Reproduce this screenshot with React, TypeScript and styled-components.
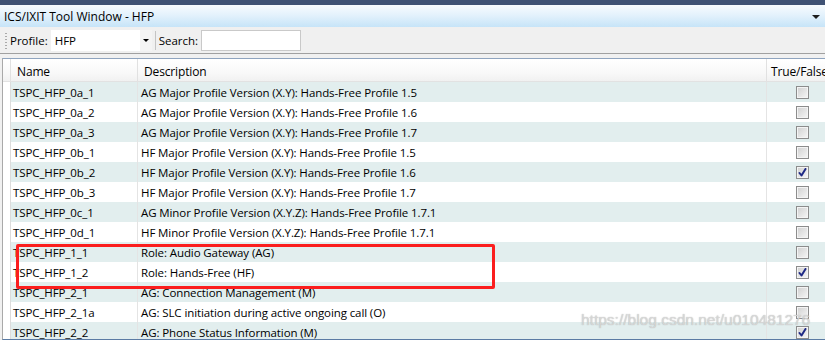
import React from "react";
import styled, { createGlobalStyle } from "styled-components";

const Global = createGlobalStyle`
  html, body { margin: 0; padding: 0; background: #ffffff; overflow: hidden; }
  body { font-family: "Open Sans", "Noto Sans", "Liberation Sans", sans-serif; }
`;

const Window = styled.div`
  width: 825px;
  height: 340px;
  overflow: hidden;
  position: relative;
  display: flex;
  flex-direction: column;
  background: #f0f0f0;
  font-family: "Open Sans", "Noto Sans", sans-serif;
  font-size: 11.5px;
  color: #000;
`;

const TopStrip = styled.div`
  height: 5px;
  background: #3f5274;
  flex: none;
`;

const TitleBar = styled.div`
  height: 22px;
  flex: none;
  display: flex;
  align-items: center;
  justify-content: space-between;
  padding: 0 5px 0 4px;
  background: linear-gradient(#f7fbfe, #e4f2fc 45%, #c6e4f8);
  font-size: 12px;
`;

const DropArrow = styled.span`
  width: 0;
  height: 0;
  border-left: 4px solid transparent;
  border-right: 4px solid transparent;
  border-top: 4px solid #1e1e1e;
  margin-top: 2px;
`;

const Toolbar = styled.div`
  flex: none;
  display: flex;
  align-items: center;
  padding-left: 5px;
  background: #f0f0f0;
  border-bottom: 1px solid #a0a0a0;
  box-sizing: border-box;
  height: 27px;
`;

const Grip = styled.span`
  width: 2px;
  height: 17px;
  margin-right: 3px;
  background-image: radial-gradient(circle, #a9a9a9 0.9px, transparent 1px);
  background-size: 2px 3px;
`;

const Label = styled.span`
  font-size: 11.5px;
  margin-right: 3px;
`;

const Combo = styled.div`
  width: 101px;
  height: 21px;
  display: flex;
  align-items: center;
  justify-content: space-between;
  background: #ffffff;
  box-sizing: border-box;
  padding-left: 4px;
  font-size: 11.5px;
`;

const ComboButton = styled.span`
  width: 12px;
  height: 21px;
  display: flex;
  align-items: center;
  justify-content: center;
  background: #f4f4f4;
`;

const SmallArrow = styled.span`
  width: 0;
  height: 0;
  border-left: 3px solid transparent;
  border-right: 3px solid transparent;
  border-top: 3px solid #000;
`;

const Separator = styled.span`
  width: 1px;
  height: 19px;
  background: #c4c4c4;
  margin: 0 3px 0 3px;
`;

const SearchBox = styled.div`
  width: 100px;
  height: 21px;
  background: #ffffff;
  border: 1px solid #c9c9c9;
  box-sizing: border-box;
`;

const GridFrame = styled.div`
  flex: 1;
  margin-top: 4px;
  margin-left: 2px;
  background: #ffffff;
  border-left: 1px solid #a9a9a9;
  border-top: 1px solid #8fa4bf;
  border-bottom: 1px solid #5b7ba4;
  overflow: hidden;
  display: flex;
  flex-direction: column;
`;

const cols = "8px 127px 629px 70px";

const HeaderRow = styled.div`
  display: grid;
  grid-template-columns: ${cols};
  height: 22px;
  background: linear-gradient(#ffffff, #f9f9f9 60%, #f1f1f1);
  border-bottom: 1px solid #e2e2e2;
  flex: none;
`;

const HeaderCell = styled.div<{ $pad?: number }>`
  display: flex;
  align-items: center;
  padding: 3px 0 0 ${(p) => p.$pad ?? 6}px;
  font-size: 12px;
  letter-spacing: -0.15px;
  white-space: nowrap;
  overflow: hidden;
  border-right: 1px solid #e1e1e1;
`;

const Row = styled.div<{ $alt: boolean }>`
  display: grid;
  grid-template-columns: ${cols};
  height: 20px;
  flex: none;
  background: ${(p) => (p.$alt ? "#e2eeee" : "#ffffff")};
`;

const RowHead = styled.div`
  background: #ffffff;
  border-right: 1px solid #dcdcdc;
`;

const Cell = styled.div<{ $pad?: number }>`
  display: flex;
  align-items: center;
  padding-left: ${(p) => p.$pad ?? 3}px;
  white-space: nowrap;
  overflow: hidden;
  border-right: 1px solid #e4e4e4;
  font-size: 11.5px;
  letter-spacing: -0.1px;
`;

const CheckCell = styled.div`
  display: flex;
  align-items: center;
  padding-left: 29px;
`;

const Box = styled.span`
  width: 13px;
  height: 13px;
  box-sizing: border-box;
  border: 1px solid #8c8c8c;
  background: linear-gradient(135deg, #cfcfcf, #f7f7f7);
  box-shadow: inset 0 0 0 1px #f4f4f4;
  display: flex;
  align-items: center;
  justify-content: center;
`;

const Annotation = styled.div`
  position: absolute;
  left: 16px;
  top: 244px;
  width: 479px;
  height: 45px;
  box-sizing: border-box;
  border: 3px solid #fb1e1e;
  border-radius: 2px;
  pointer-events: none;
`;

const Watermark = styled.div`
  position: absolute;
  left: 581px;
  top: 311px;
  font-family: "Liberation Sans", Arial, sans-serif;
  font-size: 15.5px;
  color: rgba(225, 225, 225, 0.75);
  text-shadow: 0 0 1px rgba(150, 150, 150, 0.8);
  white-space: nowrap;
  pointer-events: none;
`;

const rows: [string, string, boolean][] = [
  ["TSPC_HFP_0a_1", "AG Major Profile Version (X.Y): Hands-Free Profile 1.5", false],
  ["TSPC_HFP_0a_2", "AG Major Profile Version (X.Y): Hands-Free Profile 1.6", false],
  ["TSPC_HFP_0a_3", "AG Major Profile Version (X.Y): Hands-Free Profile 1.7", false],
  ["TSPC_HFP_0b_1", "HF Major Profile Version (X.Y): Hands-Free Profile 1.5", false],
  ["TSPC_HFP_0b_2", "HF Major Profile Version (X.Y): Hands-Free Profile 1.6", true],
  ["TSPC_HFP_0b_3", "HF Major Profile Version (X.Y): Hands-Free Profile 1.7", false],
  ["TSPC_HFP_0c_1", "AG Minor Profile Version (X.Y.Z): Hands-Free Profile 1.7.1", false],
  ["TSPC_HFP_0d_1", "HF Minor Profile Version (X.Y.Z): Hands-Free Profile 1.7.1", false],
  ["TSPC_HFP_1_1", "Role: Audio Gateway (AG)", false],
  ["TSPC_HFP_1_2", "Role: Hands-Free (HF)", true],
  ["TSPC_HFP_2_1", "AG: Connection Management (M)", false],
  ["TSPC_HFP_2_1a", "AG: SLC initiation during active ongoing call (O)", false],
  ["TSPC_HFP_2_2", "AG: Phone Status Information (M)", true],
];

const Check = () => (
  <svg width="9" height="9" viewBox="0 0 9 9">
    <path d="M1.5 5 L3.5 7.5 L7.5 1" fill="none" stroke="#1f2a85" strokeWidth="2" strokeLinecap="round" strokeLinejoin="round" />
  </svg>
);

export default function App() {
  return (
    <>
      <Global />
      <Window>
        <TopStrip />
        <TitleBar>
          <span>ICS/IXIT Tool Window - HFP</span>
          <DropArrow />
        </TitleBar>
        <Toolbar>
          <Grip />
          <Label>Profile:</Label>
          <Combo>
            <span>HFP</span>
            <ComboButton>
              <SmallArrow />
            </ComboButton>
          </Combo>
          <Separator />
          <Label>Search:</Label>
          <SearchBox />
        </Toolbar>
        <GridFrame>
          <HeaderRow>
            <HeaderCell />
            <HeaderCell>Name</HeaderCell>
            <HeaderCell>Description</HeaderCell>
            <HeaderCell $pad={4}>True/False</HeaderCell>
          </HeaderRow>
          {rows.map(([name, desc, checked], i) => (
            <Row key={name} $alt={i % 2 === 0}>
              <RowHead />
              <Cell $pad={2}>{name}</Cell>
              <Cell $pad={3}>{desc}</Cell>
              <CheckCell>
                <Box>{checked && <Check />}</Box>
              </CheckCell>
            </Row>
          ))}
        </GridFrame>
        <Annotation />
        <Watermark>https://blog.csdn.net/u010481276</Watermark>
      </Window>
    </>
  );
}
